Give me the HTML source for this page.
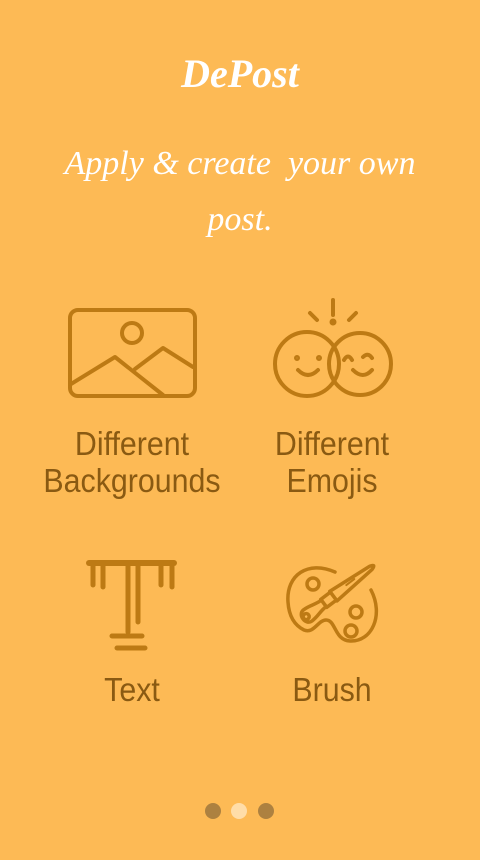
<!DOCTYPE html>
<html><head><style>
body{margin:0;width:480px;height:860px;background:#FDBA55;overflow:hidden;position:relative;font-family:"Liberation Sans",sans-serif}
.t{position:absolute;left:0;width:480px;text-align:center;color:#fff;font-family:"Liberation Serif",serif;font-style:italic}
.l{position:absolute;text-align:center;color:#8A5A12;font-family:"Liberation Sans",sans-serif;font-size:33px;line-height:37px;width:240px;transform:scaleX(0.92);}
.d{position:absolute;top:803px;width:16px;height:16px;border-radius:50%}
</style></head><body>
<div class="t" style="top:50px;font-size:40px;font-weight:bold;">DePost</div>
<div class="t" style="top:136px;font-size:34px;line-height:56px;">Apply &amp; create&nbsp; your own<br>post.</div>
<svg width="480" height="860" style="position:absolute;left:0;top:0" fill="none" stroke="#BD7A14" stroke-width="4" stroke-linecap="round" stroke-linejoin="round">
<rect x="70" y="310" width="125" height="86" rx="8"/>
<circle cx="132" cy="333" r="10"/>
<path d="M71 384 L115 357 L163 395 M135 369 L163 348 L193 367"/>
<circle cx="307" cy="364" r="32"/>
<circle cx="360" cy="364" r="31"/>
<path d="M333 300 V315 M310 313 L317 320 M356 313 L349 320"/>
<circle cx="333" cy="322" r="1.5" fill="#BD7A14"/>
<circle cx="297" cy="358" r="1" fill="#BD7A14"/><circle cx="319" cy="358" r="1" fill="#BD7A14"/>
<path d="M298 370 Q308 380 318 370 M353 370 Q363 380 372 370 M344 360 Q348 353 352 360 M363 357 Q368 352 372 358"/>
<path d="M89 563 H174" stroke-width="6"/>
<path d="M93 563 V585 M103 563 V587 M161 563 V585 M172 563 V587 M128 566 V632 M138 566 V622" stroke-width="5"/>
<path d="M112 636 H142 M117 648 H145" stroke-width="5"/>
<path d="M335 572 C308 560 286 575 288 602 C289 618 296 626 304 630 C314 634 318 620 326 620 C336 620 334 640 350 641 C372 642 384 615 371 590" stroke-width="3.5"/>
<circle cx="313" cy="584" r="6" stroke-width="3.5"/><circle cx="356" cy="612" r="6" stroke-width="3.5"/><circle cx="351" cy="631" r="6" stroke-width="3.5"/>
<g transform="translate(303,619) rotate(-37)" stroke-width="3.5" fill="#FDBA55">
<path d="M38 -6 L85 -2 Q92 0 85 2 L38 6 Z"/>
<rect x="26" y="-5" width="12" height="10"/>
<path d="M26 -4 C18 -4 14 -7 6 -7 C-2 -7 -2 7 6 7 C14 7 18 4 26 4 Z"/>
<circle cx="4" cy="0" r="3"/>
<path d="M55 -1 H65" stroke-width="2"/>
</g>
</svg>
<div class="l" style="left:12px;top:425px">Different<br>Backgrounds</div>
<div class="l" style="left:212px;top:425px">Different<br>Emojis</div>
<div class="l" style="left:12px;top:671px">Text</div>
<div class="l" style="left:212px;top:671px">Brush</div>
<div class="d" style="left:205px;background:#AD8140"></div>
<div class="d" style="left:231px;background:#FFDDA8"></div>
<div class="d" style="left:258px;background:#AD8140"></div>
</body></html>
